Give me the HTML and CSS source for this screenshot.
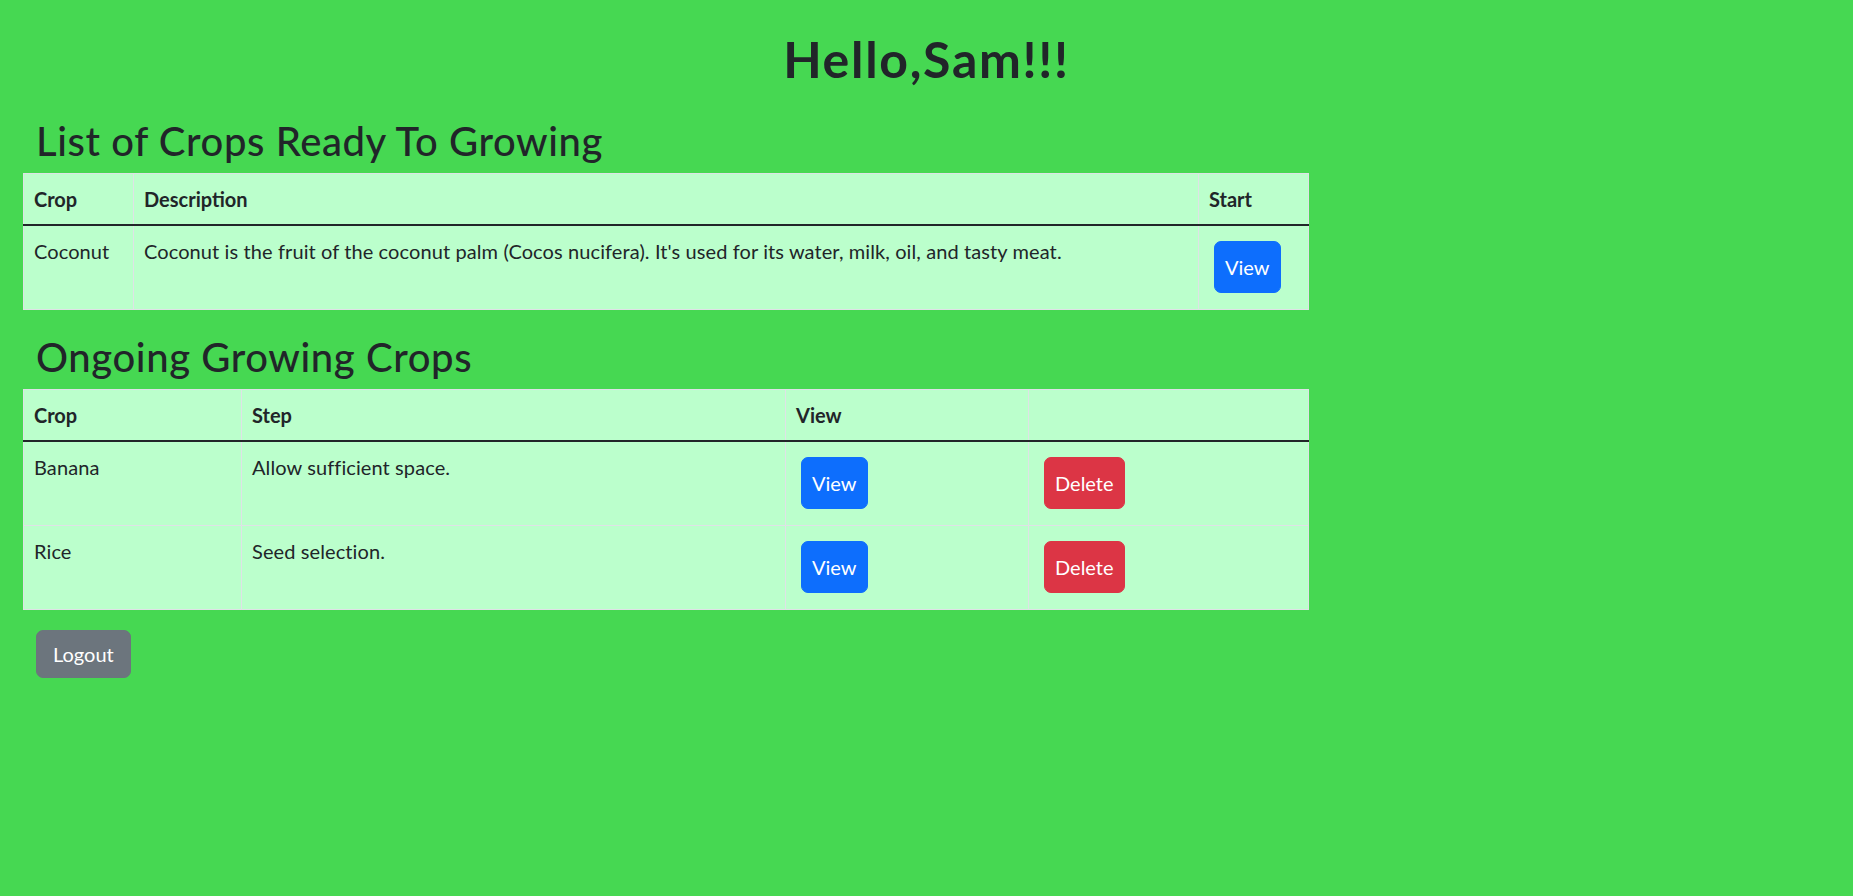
FILE: index.html
```html
<!DOCTYPE html>
<html lang="en">
<head>
<meta charset="utf-8">
<title>Crops</title>
<link rel="stylesheet" href="styles.css">
</head>
<body>
<main class="page">
  <h1 class="greeting">Hello,Sam!!!</h1>

  <h2 class="section-title">List of Crops Ready To Growing</h2>
  <table class="crop-table">
    <colgroup>
      <col class="c-ready-crop">
      <col class="c-ready-desc">
      <col class="c-ready-start">
    </colgroup>
    <thead>
      <tr><th>Crop</th><th>Description</th><th>Start</th></tr>
    </thead>
    <tbody>
      <tr>
        <td>Coconut</td>
        <td>Coconut is the fruit of the coconut palm (Cocos nucifera). It's used for its water, milk, oil, and tasty meat.</td>
        <td><button class="btn btn-cell btn-blue">View</button></td>
      </tr>
    </tbody>
  </table>

  <h2 class="section-title section-title--next">Ongoing Growing Crops</h2>
  <table class="crop-table">
    <colgroup>
      <col class="c-on-crop">
      <col class="c-on-step">
      <col class="c-on-view">
      <col class="c-on-del">
    </colgroup>
    <thead>
      <tr><th>Crop</th><th>Step</th><th>View</th><th></th></tr>
    </thead>
    <tbody>
      <tr>
        <td>Banana</td>
        <td>Allow sufficient space.</td>
        <td><button class="btn btn-cell btn-blue">View</button></td>
        <td><button class="btn btn-cell btn-red">Delete</button></td>
      </tr>
      <tr>
        <td>Rice</td>
        <td>Seed selection.</td>
        <td><button class="btn btn-cell btn-blue">View</button></td>
        <td><button class="btn btn-cell btn-red">Delete</button></td>
      </tr>
    </tbody>
  </table>

  <div class="logout-row">
    <button class="btn btn-gray">Logout</button>
  </div>
</main>
</body>
</html>
```

FILE: styles.css
```css
html, body {
  margin: 0;
  padding: 0;
}

body {
  background: #46d852;
  color: #212529;
  font-family: Lato, "Open Sans", sans-serif;
  font-size: 20px;
  line-height: 30px;
  min-height: 896px;
}

.page {
  padding: 0 23px;
  width: 1285px;
}

.greeting {
  font-size: 50px;
  line-height: 60px;
  font-weight: 700;
  letter-spacing: 1.7px;
  text-align: center;
  margin: 29px 0 27.5px;
  width: 1807px;
}

.section-title {
  font-size: 40px;
  line-height: 48px;
  font-weight: 500;
  letter-spacing: 0.6px;
  margin: 1px 0 8px;
  padding-left: 13px;
}

.section-title--next {
  margin-top: 23.5px;
}

.crop-table {
  width: 1285px;
  table-layout: fixed;
  border-collapse: collapse;
  background: #bbffcc;
  margin-bottom: 20px;
}

.c-ready-crop { width: 110px; }
.c-ready-desc { width: 1065px; }
.c-ready-start { width: 110px; }

.c-on-crop { width: 218px; }
.c-on-step { width: 544px; }
.c-on-view { width: 243px; }
.c-on-del { width: 280px; }

.crop-table th,
.crop-table td {
  border: 1px solid #dee2e6;
  padding: 10px;
  text-align: left;
  vertical-align: top;
  font-size: 20px;
  line-height: 30px;
}

.crop-table th {
  font-weight: 700;
  border-bottom: 2px solid #212529;
}

.crop-table td {
  font-weight: 400;
  padding-bottom: 11px;
  letter-spacing: 0.1px;
}

.btn {
  display: inline-block;
  font-family: inherit;
  font-size: 20px;
  line-height: 30px;
  color: #fff;
  border: 1px solid transparent;
  border-radius: 7px;
  vertical-align: top;
  cursor: pointer;
}

.btn-cell {
  padding: 10px;
  margin: 5px;
}

.btn-blue {
  background: #0d6efd;
  border-color: #0d6efd;
}

.btn-red {
  background: #dc3545;
  border-color: #dc3545;
}

.btn-gray {
  background: #6c757d;
  border-color: #6c757d;
  padding: 8px 16px;
}

.logout-row {
  padding-left: 13px;
}
```
